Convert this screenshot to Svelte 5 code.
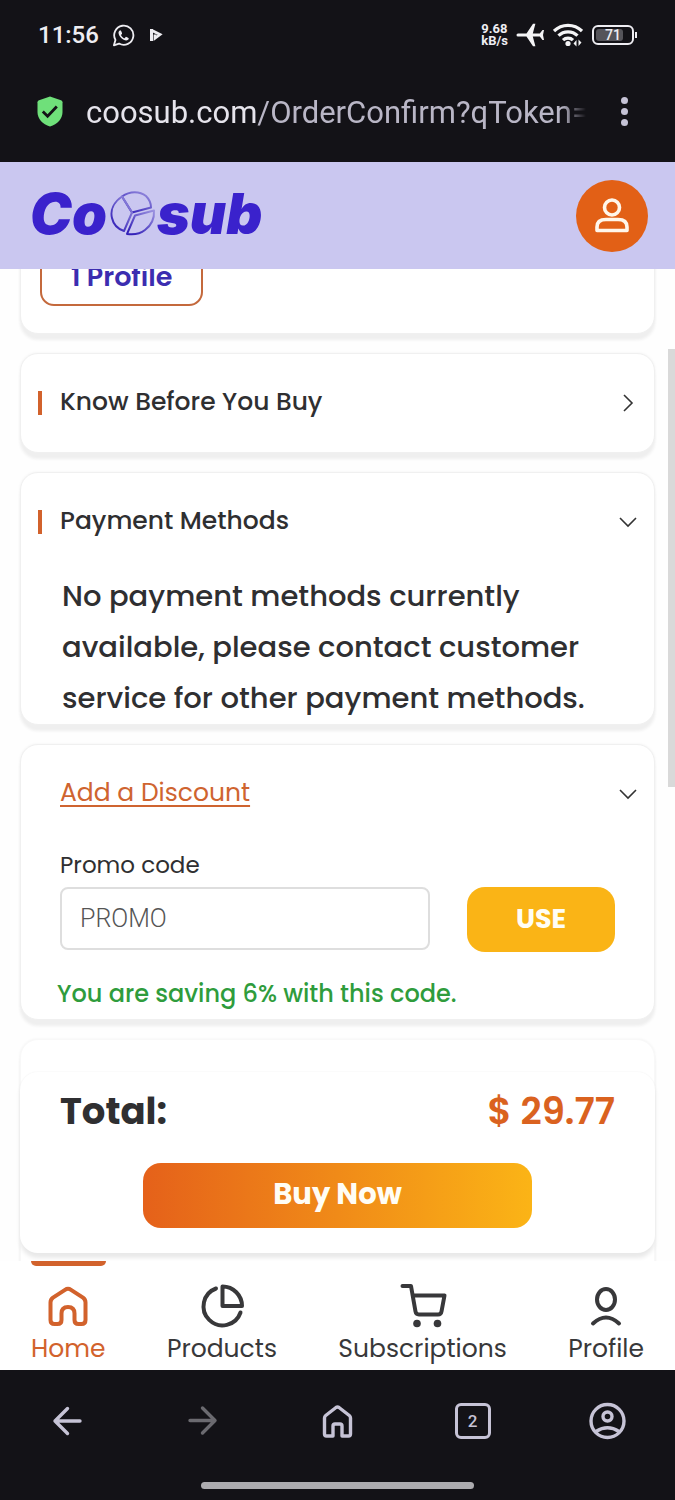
<script>
let promo = $state('')
let open = $state({ know: false, payment: true, discount: true })

const total = '$ 29.77'
const saving = 6
const battery = 71
const tabs = 2

const nav = [
	{ id: 'home', label: 'Home', active: true },
	{ id: 'products', label: 'Products' },
	{ id: 'subscriptions', label: 'Subscriptions' },
	{ id: 'profile', label: 'Profile' }
]
</script>

{#snippet chevron(isOpen)}
<svg class="chevron" viewBox="0 0 20 20" aria-hidden="true">
	{#if isOpen}
	<path d="M2 6l8 8 8-8" />
	{:else}
	<path d="M6 2l8 8-8 8" />
	{/if}
</svg>
{/snippet}

<div class="phone">
	<div class="status">
		<span class="time">11:56</span>
		<svg width="23" height="23" viewBox="0 0 24 24" aria-hidden="true">
			<path d="M2 22.2l1.6-5.6a10 10 0 1 1 3.8 3.8z" fill="none" stroke="#eeedf2" stroke-width="1.9" stroke-linejoin="round" />
			<path d="M8.6 6.6c-.5 0-1.8.9-1.8 2.6 0 3.6 4.8 8.1 8 8.1 1.600 0 2.700-1.100 2.700-2.100 0-.5-2.500-1.800-2.900-1.800-.5 0-1 1.400-1.500 1.400-1 0-3.600-2.400-3.600-3.400 0-.4 1-.9 1-1.500 0-.5-.9-3.300-1.900-3.300z" fill="#eeedf2" />
		</svg>
		<svg class="play" width="14" height="14" viewBox="0 0 14 14" aria-hidden="true">
			<path d="M2.500 1v12" stroke="#eeedf2" stroke-width="3" />
			<path d="M2.500 2.200L11 6.500l-5 3.800V6.500" fill="none" stroke="#eeedf2" stroke-width="2.800" />
		</svg>
		<div class="rate">9.68<br>kB/s</div>
		<svg width="28" height="24" viewBox="0 0 28 24" aria-hidden="true">
			<path d="M2 10.500h8.500L17 .8h2.400l-2.600 9.700h7L26.500 7H28l-1 5 1 5h-1.500l-2.700-3.500h-7l2.600 9.700H17l-6.500-9.700H2a1.500 1.500 0 0 1 0-3z" fill="#f4f4f6" />
		</svg>
		<svg width="30" height="24" viewBox="0 0 30 24" aria-hidden="true">
			<g fill="none" stroke="#f4f4f6" stroke-width="3.200">
				<path d="M1 8a20 20 0 0 1 28 0" />
				<path d="M5.500 12.700a13.500 13.500 0 0 1 19 0" />
				<path d="M10 17.200a7.200 7.200 0 0 1 10 0" />
			</g>
			<circle cx="15" cy="20.500" r="2.600" fill="#f4f4f6" />
			<path d="M20.500 20.500l3-3.500v6.500M28.500 19.500l-3 3.500v-6.500z" fill="#f4f4f6" />
		</svg>
		<div class="battery"><span class="level" style="width:{battery}%"></span><b>{battery}</b></div>
	</div>

	<div class="address">
		<svg width="26" height="31" viewBox="0 0 26 31" aria-hidden="true">
			<path d="M13 .5l11 3.700q1.500.6 1.500 2V16c0 7-5 12-12.500 14.500C5.500 28 .5 23 .5 16V6.200q0-1.400 1.500-2z" fill="#6fe07a" />
			<path d="M5.800 15.500l4.800 4.700 9.200-9.700" fill="none" stroke="#131217" stroke-width="2.800" />
		</svg>
		<a class="url" href="/OrderConfirm">coosub.com<span>/OrderConfirm?qToken=</span></a>
		<button class="dots" aria-label="Menu"><i></i><i></i><i></i></button>
	</div>

	<header>
		<a class="logo" href="/" aria-label="Coosub">
			Co
			<svg width="46" height="46" viewBox="0 0 46 46" aria-hidden="true">
				<defs>
					<linearGradient id="ring" x1="1" y1="0" x2="0.2" y2="1">
						<stop offset="0" stop-color="#9c93e0" />
						<stop offset="1" stop-color="#3320b8" />
					</linearGradient>
				</defs>
				<g fill="none" stroke="url(#ring)" stroke-width="2" stroke-linejoin="round">
					<path d="M12 5.500C20-.5 30 0 36 5c3 3 5 7 5 11.500l-19 5z" />
					<path d="M12 5.500C4 11 0 19 2 27c1.500 7 6 11 12 13l8-18.500z" />
					<path d="M25 24.500l19-5c.5 8-3 15-9 19.500-5 4-11 5-18 4z" />
				</g>
			</svg>
			sub
		</a>
		<button class="avatar" aria-label="Account">
			<svg width="36" height="36" viewBox="0 0 36 36" fill="none" stroke="#fff6ea" stroke-width="3.600">
				<circle cx="18" cy="9.500" r="7.500" />
				<path d="M3 32.500v-3.500q0-7.500 9-7.500h12q9 0 9 7.500v3.500z" stroke-linejoin="round" />
			</svg>
		</button>
	</header>

	<main>
		<section class="card plan">
			<button class="chip">1 Profile</button>
		</section>

		<section class="card">
			<button class="row" aria-expanded={open.know} onclick={() => (open.know = !open.know)}>
				<i class="tick"></i>
				<span>Know Before You Buy</span>
				{@render chevron(open.know)}
			</button>
		</section>

		<section class="card">
			<button class="row" aria-expanded={open.payment} onclick={() => (open.payment = !open.payment)}>
				<i class="tick"></i>
				<span>Payment Methods</span>
				{@render chevron(open.payment)}
			</button>
			{#if open.payment}
			<p class="notice">No payment methods currently available, please contact customer service for other payment methods.</p>
			{/if}
		</section>

		<section class="card">
			<button class="row discount" aria-expanded={open.discount} onclick={() => (open.discount = !open.discount)}>
				<span>Add a Discount</span>
				{@render chevron(open.discount)}
			</button>
			{#if open.discount}
			<form class="promo" onsubmit={(e) => e.preventDefault()}>
				<label for="promo">Promo code</label>
				<div class="fields">
					<input id="promo" type="text" placeholder="PROMO" bind:value={promo}>
					<button class="use">USE</button>
				</div>
			</form>
			<p class="saving">You are saving {saving}% with this code.</p>
			{/if}
		</section>

		<section class="card summary"></section>

		<div class="checkout">
			<div class="total"><span>Total:</span><strong>{total}</strong></div>
			<button class="buy">Buy Now</button>
		</div>
		<div class="scrollbar"></div>
	</main>

	<nav class="tabs">
		{#each nav as item}
		<a href="/{item.id}" class:active={item.active}>
			<svg width="44" height="44" viewBox="0 0 44 44" aria-hidden="true">
				{#if item.id === 'home'}
				<path d="M4.500 18.500q0-3 2.500-4.800L19 5.800q3-2 6 0l12 7.900q2.500 1.800 2.500 4.800V36q0 4-4 4h-3q-4 0-4-4v-6.500q0-6.500-6.500-6.500t-6.500 6.500V36q0 4-4 4h-3q-4 0-4-4z" />
				{:else if item.id === 'products'}
				<path d="M16 4.500a19 19 0 1 0 24.500 24M22.500 2.500v19.500H42A19.500 19.500 0 0 0 22.500 2.500z" />
				{:else if item.id === 'subscriptions'}
				<path d="M1.500 2H10l4.500 25.500q.5 3 3.500 3h19q3 0 3.500-3L43.500 11.500H12" />
				<g fill="currentColor" stroke="none"><circle cx="16" cy="39.500" r="3.800" /><circle cx="36.500" cy="39.500" r="3.800" /></g>
				{:else}
				<ellipse cx="22" cy="15.500" rx="9" ry="10.500" />
				<path d="M9 39.500q13-12 26 0" />
				{/if}
			</svg>
			{item.label}
		</a>
		{/each}
	</nav>

	<div class="toolbar">
		<button aria-label="Back">
			<svg width="40" height="40" viewBox="0 0 40 40"><path d="M32 20H7M19.500 7.500L7 20l12.500 12.500" /></svg>
		</button>
		<button aria-label="Forward" disabled>
			<svg width="40" height="40" viewBox="0 0 40 40"><path d="M7 19.500h25M19.500 7L32 19.500 19.500 32" /></svg>
		</button>
		<button aria-label="Home page">
			<svg width="40" height="40" viewBox="0 0 40 40"><path d="M6.500 17q0-1.500 1.200-2.500L18 6.500q1.500-1 3 0l10.300 8Q32.500 15.500 32.500 17v16q0 2-2 2H24V25q0-2-2-2h-5q-2 0-2 2v10H8.500q-2 0-2-2z" /></svg>
		</button>
		<button aria-label="Tabs"><span class="count">{tabs}</span></button>
		<button aria-label="Profile">
			<svg width="40" height="40" viewBox="0 0 40 40"><circle cx="19.500" cy="20" r="16.500" /><circle cx="19.500" cy="15.500" r="4.500" /><path d="M8 30.500q11.500-7.500 23 0" /></svg>
		</button>
	</div>
	<div class="gesture"><i></i></div>
</div>

<style>
:global(body) {
	margin: 0;
	background: #131217;
}
.phone {
	display: flex;
	flex-direction: column;
	height: 100vh;
	background: #131217;
	color: #2f2f31;
	font-family: Poppins, Inter, sans-serif;
}
button {
	padding: 0;
	border: 0;
	background: none;
	color: inherit;
	font: inherit;
	cursor: pointer;
}
a {
	color: inherit;
	text-decoration: none;
}
p {
	margin: 0;
}

.status {
	display: flex;
	align-items: center;
	height: 70px;
	padding: 0 41px 0 38px;
	color: #eeedf2;
	font-family: Roboto, sans-serif;
}
.time {
	margin-right: 13px;
	font-size: 24px;
	font-weight: 500;
}
.play {
	margin-left: 14px;
}
.rate {
	margin: 0 8px 0 auto;
	font-size: 13px;
	font-weight: 700;
	line-height: 12px;
}
.status svg + svg:not(.play) {
	margin: 0 9px;
}
.battery {
	position: relative;
	display: flex;
	align-items: center;
	justify-content: center;
	box-sizing: border-box;
	width: 42px;
	height: 20px;
	padding: 2px;
	border: 2px solid #eeedf2;
	border-radius: 6px;
	font-size: 14px;
}
.battery::after {
	content: '';
	position: absolute;
	right: -5px;
	width: 2px;
	height: 6px;
	background: #eeedf2;
}
.battery .level {
	position: absolute;
	top: 2px;
	bottom: 2px;
	left: 2px;
	border-radius: 3px;
	background: #55545a;
}
.battery b {
	position: relative;
	font-weight: 500;
}

.address {
	display: flex;
	align-items: center;
	height: 92px;
	padding: 0 47px 10px 37px;
	box-sizing: border-box;
	font-family: Roboto, sans-serif;
}
.url {
	flex: 1;
	margin: 0 35px 0 23px;
	padding-top: 4px;
	overflow: hidden;
	color: #e6e4ec;
	font-size: 31px;
	line-height: 44px;
	white-space: nowrap;
	mask-image: linear-gradient(to left, transparent, #000 24px);
}
.url span {
	color: #b9b6c6;
}
.dots {
	display: grid;
	gap: 4px;
}
.dots i {
	width: 7px;
	height: 7px;
	border-radius: 50%;
	background: #c6c3d6;
}

header {
	display: flex;
	align-items: center;
	justify-content: space-between;
	height: 107px;
	padding: 0 27px 0 30px;
	background: #cac7f0;
}
.logo {
	display: flex;
	align-items: center;
	padding-bottom: 4px;
	color: #3a22cc;
	font-family: Inter, sans-serif;
	font-size: 56px;
	font-style: italic;
	font-weight: 900;
	line-height: 70px;
}
.logo svg {
	margin: 0 1px 0 3px;
}
.avatar {
	display: grid;
	place-items: center;
	width: 72px;
	height: 72px;
	border-radius: 50%;
	background: #e26016;
}

main {
	position: relative;
	display: flex;
	flex: 1;
	flex-direction: column;
	gap: 19px;
	min-height: 0;
	padding: 0 20px;
	overflow: hidden;
	background: #fefefe;
}
.card {
	flex: none;
	border: 1px solid #f0f0f0;
	border-radius: 18px;
	background: #fff;
	box-shadow: 0 6px 3px #efefef, 0 0 3px #f2f2f2;
}
/* scrolled up under the header */
.plan {
	margin-top: -50px;
	padding: 28px 19px 27px;
}
.chip {
	display: block;
	width: 163px;
	height: 58px;
	border: 2px solid #c4693c;
	border-radius: 14px;
	color: #3c2db0;
	font-size: 27px;
	font-weight: 600;
}
.row {
	display: flex;
	align-items: center;
	width: 100%;
	height: 98px;
	padding: 0 16px 0 17px;
	font-size: 25px;
	font-weight: 500;
	text-align: left;
}
.row span {
	flex: 1;
	padding-bottom: 2px;
}
.tick {
	width: 4px;
	height: 24px;
	margin-right: 18px;
	background: #d2622c;
}
.chevron {
	width: 20px;
	height: 20px;
	fill: none;
	stroke: #333;
	stroke-width: 1.6;
}
.discount {
	padding-left: 39px;
	color: #cf6430;
	font-weight: 400;
}
.discount span {
	text-decoration: underline;
	text-underline-offset: 4px;
}
.notice {
	padding: 0 39px 0 41px;
	font-size: 29px;
	font-weight: 500;
	line-height: 51px;
}
.promo {
	padding: 0 39px;
}
.promo label {
	display: block;
	font-size: 23px;
	line-height: 44px;
}
.fields {
	display: flex;
	align-items: flex-start;
	gap: 37px;
}
.fields input {
	flex: 1;
	box-sizing: border-box;
	min-width: 0;
	height: 63px;
	padding: 0 18px;
	border: 2px solid #dedede;
	border-radius: 8px;
	font-family: Roboto, sans-serif;
	font-size: 25px;
	font-weight: 300;
}
.fields input::placeholder {
	color: #555;
}
.use {
	width: 148px;
	height: 65px;
	padding-bottom: 2px;
	border-radius: 18px;
	background: #fab416;
	color: #fffdf5;
	font-size: 27px;
	font-weight: 700;
}
.saving {
	padding: 17px 36px 0;
	color: #2f9c3c;
	font-size: 24px;
	font-weight: 500;
	line-height: 50px;
}
.summary {
	height: 300px;
	border-color: #f8f8f8;
}
.checkout {
	position: absolute;
	right: 20px;
	bottom: 8px;
	left: 20px;
	display: flex;
	flex-direction: column;
	align-items: center;
	gap: 28px;
	padding: 15px 40px 25px;
	border-radius: 18px;
	background: #fff;
	box-shadow: 0 5px 4px #e9e9e9, 0 0 2px #f0f0f0;
}
.total {
	display: flex;
	justify-content: space-between;
	width: 100%;
	font-size: 37px;
	font-weight: 700;
	line-height: 48px;
}
.total strong {
	color: #da621f;
	font-weight: 600;
}
.buy {
	width: 70%;
	height: 65px;
	padding-bottom: 2px;
	border-radius: 18px;
	background: linear-gradient(to right, #e5611a, #fbb416);
	color: #fffdf5;
	font-size: 29px;
	font-weight: 700;
}
.scrollbar {
	position: absolute;
	top: 80px;
	right: 0;
	width: 7px;
	height: 438px;
	background: #d9d9d9;
}

.tabs {
	display: flex;
	justify-content: space-between;
	height: 109px;
	padding: 0 31px;
	background: #fff;
	color: #38383a;
	font-size: 25px;
	line-height: 36px;
}
.tabs a {
	display: flex;
	flex-direction: column;
	align-items: center;
	border-top: 5px solid transparent;
}
.tabs a.active {
	position: relative;
	color: #d2622c;
}
.tabs a.active::before {
	content: '';
	position: absolute;
	top: -5px;
	width: 100%;
	height: 5px;
	border-radius: 0 0 5px 5px;
	background: currentColor;
}
.tabs svg {
	margin: 18px 0 3px;
	overflow: visible;
	fill: none;
	stroke: currentColor;
	stroke-width: 4;
	stroke-linecap: round;
	stroke-linejoin: round;
}

.toolbar {
	display: flex;
	justify-content: space-around;
	height: 101px;
	color: #c6c3d6;
}
.toolbar button {
	display: grid;
	flex: 1;
	place-items: center;
}
.toolbar button:disabled {
	color: #6b6a70;
}
.toolbar svg {
	fill: none;
	stroke: currentColor;
	stroke-width: 3.4;
	stroke-linecap: round;
	stroke-linejoin: round;
}
.count {
	width: 30px;
	border: 3px solid;
	border-radius: 6px;
	font-family: Roboto, sans-serif;
	font-size: 17px;
	font-weight: 500;
	line-height: 30px;
}
.gesture {
	display: flex;
	justify-content: center;
	height: 29px;
}
.gesture i {
	width: 273px;
	height: 7px;
	margin-top: 11px;
	border-radius: 4px;
	background: #adacb0;
}
</style>
